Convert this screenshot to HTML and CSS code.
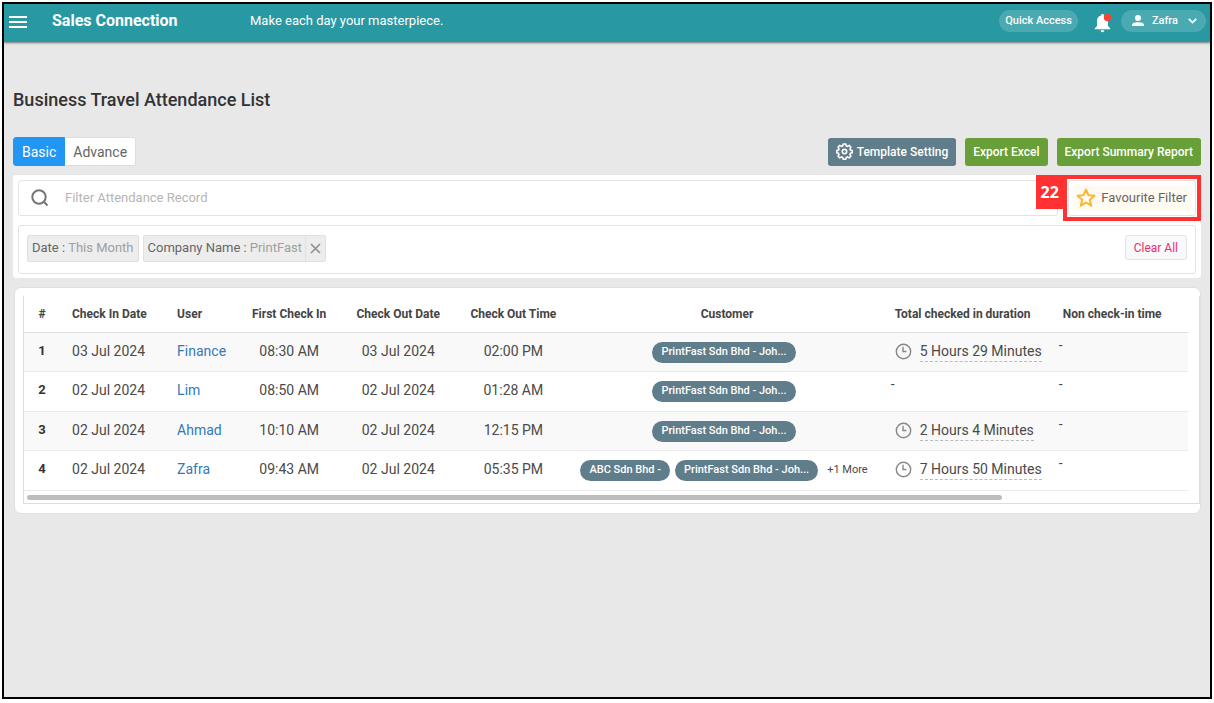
FILE: index.html
```html
<!DOCTYPE html>
<html lang="en">
<head>
<meta charset="utf-8">
<title>Business Travel Attendance List</title>
<link rel="stylesheet" href="styles.css">
</head>
<body>
<svg class="sprite" aria-hidden="true">
  <symbol id="clock" viewBox="0 0 18 18"><circle cx="9" cy="9" r="7.6"/><path d="M8.500 4v5h3.600"/></symbol>
</svg>
<div class="app">
  <header class="topbar">
    <button class="icon-btn menu" aria-label="Menu"><svg width="18" height="12" viewBox="0 0 18 12"><path d="M0 1h18M0 6h18M0 11h18" stroke="#fff" stroke-width="1.8"/></svg></button>
    <span class="brand">Sales Connection</span>
    <span class="motto">Make each day your masterpiece.</span>
    <button class="pill-btn">Quick Access</button>
    <button class="icon-btn bell" aria-label="Notifications"><svg width="18" height="20" viewBox="0 0 18 20"><path fill="#fff" d="M7 2.6C7 1.6 7.6 1 8.5 1S10 1.600 10 2.600C12.700 3.200 14 5.300 14 8v5l2.200 2.300v1H.8v-1L3 13V8c0-2.700 1.300-4.800 4-5.400zM6.600 17.300h3.800c0 1.100-.8 1.900-1.900 1.900s-1.900-.8-1.900-1.900z"/><circle cx="13.500" cy="4.500" r="3.700" fill="#f44336"/></svg></button>
    <button class="pill-btn user"><svg width="12" height="12" viewBox="0 0 12 12" fill="#fff"><circle cx="6" cy="3" r="3"/><path d="M0 11V9.700C0 8 3 7.200 6 7.200s6 .8 6 2.500V11z"/></svg><span>Zafra</span><svg width="9" height="6" viewBox="0 0 9 6" fill="none" stroke="#fff" stroke-width="1.700"><path d="M.8.8l3.700 3.700L8.200.8"/></svg></button>
  </header>
  <main class="content">
    <h1>Business Travel Attendance List</h1>
    <div class="toolbar">
      <div class="tabs"><button class="tab active">Basic</button><button class="tab">Advance</button></div>
      <div class="actions">
        <button class="btn slate"><svg width="17" height="17" viewBox="0 0 17 17" fill="none" stroke="#fff" stroke-width="1.600" stroke-linejoin="round"><path d="M7.200 1h2.600l.4 1.900 1.300.5 1.700-1 1.700 1.800-1 1.600.5 1.300 1.900.4v2.200l-1.900.5-.5 1.300 1 1.600-1.700 1.800-1.700-1-1.300.5-.4 1.900H7.200l-.5-1.900-1.200-.5-1.700 1-1.800-1.800 1-1.600-.5-1.300L.7 9.700V7.500l1.800-.4L3 5.800 2 4.200l1.800-1.800 1.700 1 1.200-.5z"/><circle cx="8.500" cy="8.600" r="2.200"/></svg>Template Setting</button>
        <button class="btn green">Export Excel</button>
        <button class="btn green">Export Summary Report</button>
      </div>
    </div>
    <section class="filters">
      <div class="search-row">
        <label class="search"><svg width="18" height="18" viewBox="0 0 18 18" fill="none" stroke="#757575" stroke-width="2"><circle cx="8" cy="8" r="6.700"/><path d="M12.500 12.500l4 4"/></svg><input type="text" aria-label="Filter Attendance Record" placeholder="Filter Attendance Record"></label>
        <div class="favourite-wrap">
          <button class="favourite"><span class="fav-fill"><svg width="20" height="20" viewBox="0 0 20 20" fill="none" stroke="#fdb72e" stroke-width="2" stroke-linejoin="round"><path d="M10 1.500l2.400 5.700 6.100.5-4.700 4 1.500 6-5.300-3.200-5.300 3.200 1.500-6-4.700-4 6.100-.5z"/></svg>Favourite Filter</span></button>
          <span class="outline"></span><span class="step">22</span>
        </div>
      </div>
      <div class="chips">
        <span class="chip"><span>Date :</span><span class="value">This Month</span></span>
        <span class="chip"><span>Company Name :</span><span class="value">PrintFast</span><button class="remove" aria-label="Remove company filter"><svg width="11" height="11" viewBox="0 0 11 11" stroke="#8c8c8c" stroke-width="1.500"><path d="M1 1l9 9M10 1l-9 9"/></svg></button></span>
        <button class="clear">Clear All</button>
      </div>
    </section>
    <section class="card">
      <div class="scroller">
        <table>
          <colgroup><col class="c-num"><col class="c-date"><col class="c-user"><col class="c-first"><col class="c-out"><col class="c-time"><col class="c-cust"><col class="c-total"><col class="c-non"></colgroup>
          <thead><tr><th class="mid">#</th><th>Check In Date</th><th>User</th><th class="mid">First Check In</th><th class="mid">Check Out Date</th><th class="mid">Check Out Time</th><th class="mid">Customer</th><th>Total checked in duration</th><th class="non">Non check-in time</th></tr></thead>
          <tbody>
            <tr><td class="num">1</td><td>03 Jul 2024</td><td><a href="#">Finance</a></td><td class="mid">08:30 AM</td><td class="mid">03 Jul 2024</td><td class="mid">02:00 PM</td><td class="cust"><div class="tags"><span class="tag">PrintFast Sdn Bhd - Joh...</span></div></td><td><span class="time"><svg><use href="#clock"/></svg><span>5 Hours 29 Minutes</span></span></td><td class="dash">-</td></tr>
            <tr><td class="num">2</td><td>02 Jul 2024</td><td><a href="#">Lim</a></td><td class="mid">08:50 AM</td><td class="mid">02 Jul 2024</td><td class="mid">01:28 AM</td><td class="cust"><div class="tags"><span class="tag">PrintFast Sdn Bhd - Joh...</span></div></td><td class="dash">-</td><td class="dash">-</td></tr>
            <tr><td class="num">3</td><td>02 Jul 2024</td><td><a href="#">Ahmad</a></td><td class="mid">10:10 AM</td><td class="mid">02 Jul 2024</td><td class="mid">12:15 PM</td><td class="cust"><div class="tags"><span class="tag">PrintFast Sdn Bhd - Joh...</span></div></td><td><span class="time"><svg><use href="#clock"/></svg><span>2 Hours 4 Minutes</span></span></td><td class="dash">-</td></tr>
            <tr><td class="num">4</td><td>02 Jul 2024</td><td><a href="#">Zafra</a></td><td class="mid">09:43 AM</td><td class="mid">02 Jul 2024</td><td class="mid">05:35 PM</td><td class="cust"><div class="tags"><span class="tag">ABC Sdn Bhd -</span><span class="tag">PrintFast Sdn Bhd - Joh...</span><span class="more">+1 More</span></div></td><td><span class="time"><svg><use href="#clock"/></svg><span>7 Hours 50 Minutes</span></span></td><td class="dash">-</td></tr>
          </tbody>
        </table>
        <div class="track"><div class="thumb"></div></div>
      </div>
    </section>
  </main>
</div>
</body>
</html>
```
FILE: styles.css
```css
* { box-sizing: border-box; }
body {
  margin: 0;
  padding: 2px 2px 4px;
  min-height: 100vh;
  display: flex;
  background: #fff;
  font: 14px/20px Roboto, sans-serif;
  color: #4a4a4a;
}
button, input { font: inherit; color: inherit; margin: 0; padding: 0; border: 0; background: none; }
button { cursor: pointer; white-space: nowrap; }
svg { display: block; flex: none; }
.sprite { position: absolute; width: 0; height: 0; }
.app { flex: 1; min-width: 0; border: 2px solid #000; background: #e8e8e8; }

.topbar {
  display: flex;
  align-items: center;
  height: 38px;
  padding: 0 4px 4px 5px;
  background: #2899a3;
  color: #fff;
  box-shadow: 0 1px 2px rgba(0, 0, 0, .5);
}
.menu { margin-right: 25px; padding-top: 2px; }
.brand { font-size: 16px; font-weight: 700; width: 198px; }
.motto { font-size: 13px; flex: 1; }
.pill-btn {
  height: 22px;
  padding: 0 6px;
  border-radius: 11px;
  background: #4aa9b1;
  font-size: 11px;
  font-weight: 500;
}
.bell { margin: 3px 9px 0 16px; }
.user { display: flex; align-items: center; gap: 8px; padding: 0 9px 0 11px; }
.user span { margin-right: 2px; }

.content { padding: 48px 9px 0; }
h1 { margin: 0; font-size: 18px; line-height: 20px; font-weight: 500; color: #333; }
.toolbar { display: flex; justify-content: space-between; align-items: center; margin-top: 27px; }
.tabs { display: flex; }
.tab {
  height: 29px;
  padding: 0 8px;
  border: 1px solid #ddd;
  border-left: 0;
  border-radius: 0 3px 3px 0;
  background: #fff;
  color: #666;
}
.tab.active { border: 1px solid #2196f3; border-radius: 3px 0 0 3px; background: #2196f3; color: #fff; }
.actions { display: flex; gap: 9px; }
.btn {
  display: flex;
  align-items: center;
  gap: 4px;
  height: 28px;
  padding: 0 8px;
  border-radius: 3px;
  color: #fff;
  font-size: 12px;
  font-weight: 500;
}
.slate { background: #607d8b; }
.green { background: #689f38; }

.filters { margin-top: 9px; padding: 5px 5px 4px; background: #fff; border-radius: 3px; }
.search-row { display: flex; gap: 10px; }
.search {
  flex: 1;
  display: flex;
  align-items: center;
  gap: 16px;
  height: 36px;
  padding: 0 12px;
  border: 1px solid #e3e3e3;
  border-radius: 3px;
}
.search input { flex: 1; min-width: 0; outline: 0; font-size: 13px; }
.search input::placeholder { color: #b5b5b5; opacity: 1; }
.favourite-wrap { position: relative; }
.favourite { height: 36px; padding: 4px; border: 1px solid #e3e3e3; border-radius: 3px; }
.fav-fill {
  display: flex;
  align-items: center;
  gap: 5px;
  height: 26px;
  padding: 0 4px 0 3px;
  border-radius: 3px;
  background: #fffaf2;
  color: #666;
  font-size: 13px;
}
.outline { position: absolute; inset: -5px; border: 4px solid #ff3131; pointer-events: none; }
.step {
  position: absolute;
  right: calc(100% + 5px);
  top: -5px;
  width: 27px;
  background: #ff3131;
  color: #fff;
  font: 700 16px/34px "Open Sans", sans-serif;
  text-align: center;
}
.chips {
  display: flex;
  align-items: flex-start;
  gap: 4px;
  min-height: 49px;
  margin-top: 9px;
  padding: 9px 8px;
  border: 1px solid #e3e3e3;
  border-radius: 3px;
}
.chip {
  display: flex;
  align-items: center;
  gap: 3px;
  height: 27px;
  padding: 0 4px 2px;
  border: 1px solid #e0e0e0;
  border-radius: 2px;
  background: #ededed;
  color: #666;
  font-size: 13px;
}
.value { color: #a0a0a0; }
.remove { display: grid; place-items: center; width: 20px; height: 25px; margin: 2px -4px 0 0; border-left: 1px solid #e0e0e0; }
.clear {
  height: 25px;
  margin-left: auto;
  padding: 0 8px;
  border: 1px solid #e3e3e3;
  border-radius: 3px;
  background: #f8f9fa;
  color: #f02d6b;
  font-size: 12px;
}

.card { margin: 9px 0 0 1px; padding: 8px 0 9px 8px; border: 1px solid #e0e0e0; border-radius: 7px; background: #fff; }
.scroller { border: solid #ddd; border-width: 0 1px 1px; padding-right: 11px; }
table { width: 100%; table-layout: fixed; border-collapse: separate; border-spacing: 0; }
.c-num { width: 36px; }
.c-date { width: 105px; }
.c-user { width: 72px; }
.c-first { width: 104px; }
.c-out { width: 114px; }
.c-time { width: 116px; }
.c-cust { width: 311px; }
.c-total { width: 164px; }
.c-non { width: 141px; }
th, td { height: 39px; padding: 8px 0 0 12px; border-bottom: 1px solid #eaeaea; vertical-align: top; text-align: left; white-space: nowrap; }
th { height: 37px; font-size: 12px; font-weight: 700; color: #444; border-color: #ddd; }
.mid { padding-left: 0; text-align: center; }
.non { padding-left: 16px; }
tbody tr:nth-child(odd) { background: #f9f9f9; }
tbody tr:nth-child(even) td { height: 40px; }
.num { padding-left: 0; text-align: center; font-weight: 700; font-size: 13px; color: #333; }
a { color: #337ab7; text-decoration: none; }
td.cust { padding: 9px 6px 0 0; }
.tags { display: flex; justify-content: center; gap: 5px; }
.tag { height: 21px; padding: 0 9px; border-radius: 11px; background: #607d8b; color: #fff; font-size: 11px; font-weight: 500; }
.more { margin-left: 4px; font-size: 11px; }
.time { display: flex; align-items: flex-start; gap: 8px; }
.time svg { width: 17px; height: 17px; margin-top: 2px; fill: none; stroke: #888; stroke-width: 1.5; }
.time span { height: 21px; border-bottom: 1px dashed #bbb; }
td.dash { padding: 2px 0 0 8px; }
td.dash:last-child { padding-left: 12px; }
.track { padding: 4px 0 3px 3px; }
.thumb { width: 84%; height: 5px; border-radius: 3px; background: #bdbdbd; }
```
